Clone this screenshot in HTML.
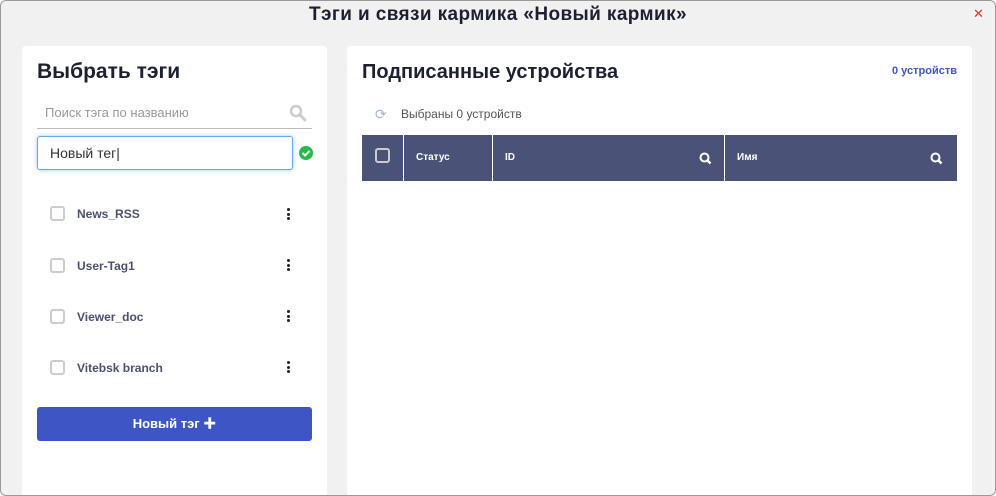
<!DOCTYPE html>
<html><head><meta charset="utf-8"><style>
*{box-sizing:border-box;margin:0;padding:0}
body{width:996px;height:496px;overflow:hidden;font-family:"Liberation Sans","Noto Sans CJK SC",sans-serif;background:#fff}
.win{position:absolute;left:0;top:0;width:996px;height:496px;background:#f1f1f1;border:1px solid #9a9a9a;border-radius:6px;overflow:hidden}
.title{position:absolute;top:3px;left:-1px;width:996px;text-align:center;font-size:19px;font-weight:bold;color:#1c2030;letter-spacing:0.4px}
.close{position:absolute;left:972px;top:5px;color:#d33;font-size:13px}
.panel{position:absolute;background:#fff;border-radius:4px;top:45px;height:460px}
h2{position:absolute;font-size:21px;font-weight:bold;color:#1c2030}
.tag{position:absolute;left:27px;font-size:12px;font-weight:bold;color:#4a5070}
.cb{position:absolute;left:28px;width:15px;height:15px;border:2px solid #ccc;border-radius:3px}
.dots{position:absolute;left:265px;width:4px}
.dots i{display:block;width:3px;height:3px;background:#222;border-radius:50%;margin-bottom:1.5px}
.th{position:absolute;top:0;height:46px;color:#fff;font-size:10px;font-weight:bold;line-height:46px;border-left:1px solid #fff}
</style></head><body><div class="win">
<div class="title">Тэги и связи кармика «Новый кармик»</div>
<div class="close">✕</div>
<div class="panel" style="left:21px;width:305px">
<h2 style="left:15px;top:14px">Выбрать тэги</h2>
<div style="position:absolute;left:23px;top:59px;font-size:13px;color:#999">Поиск тэга по названию</div>
<svg style="position:absolute;left:267px;top:58px" width="18" height="18" viewBox="0 0 18 18"><circle cx="7" cy="7" r="5" stroke="#ccc" stroke-width="2.5" fill="none"/><path d="M11 11l5 5" stroke="#ccc" stroke-width="3" stroke-linecap="round"/></svg>
<div style="position:absolute;left:15px;top:82px;width:275px;height:1px;background:#bbb"></div>
<div style="position:absolute;left:15px;top:90px;width:256px;height:34px;border:1px solid #6aaae8;border-radius:3px;box-shadow:0 0 4px #9cc8f0;font-size:14px;color:#333;padding:8px 12px">Новый тег|</div>
<svg style="position:absolute;left:277px;top:100px" width="14" height="14"><circle cx="7" cy="7" r="7" fill="#22bb44"/><path d="M3.5 7l2.5 2.5 4.5-4.5" stroke="#fff" stroke-width="2" fill="none"/></svg>
<div class="cb" style="top:160px"></div><div class="tag" style="top:161px;left:55px">News_RSS</div><div class="dots" style="top:162px"><i></i><i></i><i></i></div>
<div class="cb" style="top:212px"></div><div class="tag" style="top:213px;left:55px">User-Tag1</div><div class="dots" style="top:213px"><i></i><i></i><i></i></div>
<div class="cb" style="top:263px"></div><div class="tag" style="top:264px;left:55px">Viewer_doc</div><div class="dots" style="top:264px"><i></i><i></i><i></i></div>
<div class="cb" style="top:314px"></div><div class="tag" style="top:315px;left:55px">Vitebsk branch</div><div class="dots" style="top:315px"><i></i><i></i><i></i></div>
<div style="position:absolute;left:15px;top:361px;width:275px;height:34px;background:#3d55c5;border-radius:3px;color:#fff;font-size:13px;font-weight:bold;text-align:center;line-height:34px">Новый тэг ✚</div>
</div>
<div class="panel" style="left:346px;width:625px">
<h2 style="left:15px;top:15px;font-size:20px">Подписанные устройства</h2>
<div style="position:absolute;right:15px;top:19px;font-size:11px;font-weight:bold;color:#3d55c5">0 устройств</div>
<div style="position:absolute;left:28px;top:60px;font-size:14px;color:#a8b4e0">⟳</div>
<div style="position:absolute;left:54px;top:61px;font-size:12px;color:#555">Выбраны 0 устройств</div>
<div style="position:absolute;left:15px;top:89px;width:595px;height:46px;background:#4a5278">
<div style="position:absolute;left:13px;top:13px;width:15px;height:15px;border:2px solid #ccc;border-radius:3px"></div>
<div class="th" style="left:41px;width:89px;padding-left:12px">Статус</div>
<div class="th" style="left:130px;width:232px;padding-left:12px">ID<svg style="position:absolute;right:12px;top:17px" width="13" height="13"><circle cx="5.5" cy="5.5" r="4" stroke="#fff" stroke-width="2" fill="none"/><path d="M8.5 8.5l3 3" stroke="#fff" stroke-width="2.5"/></svg></div>
<div class="th" style="left:362px;width:233px;padding-left:12px">Имя<svg style="position:absolute;right:14px;top:17px" width="13" height="13"><circle cx="5.5" cy="5.5" r="4" stroke="#fff" stroke-width="2" fill="none"/><path d="M8.5 8.5l3 3" stroke="#fff" stroke-width="2.5"/></svg></div>
</div>
</div>
</div></body></html>
